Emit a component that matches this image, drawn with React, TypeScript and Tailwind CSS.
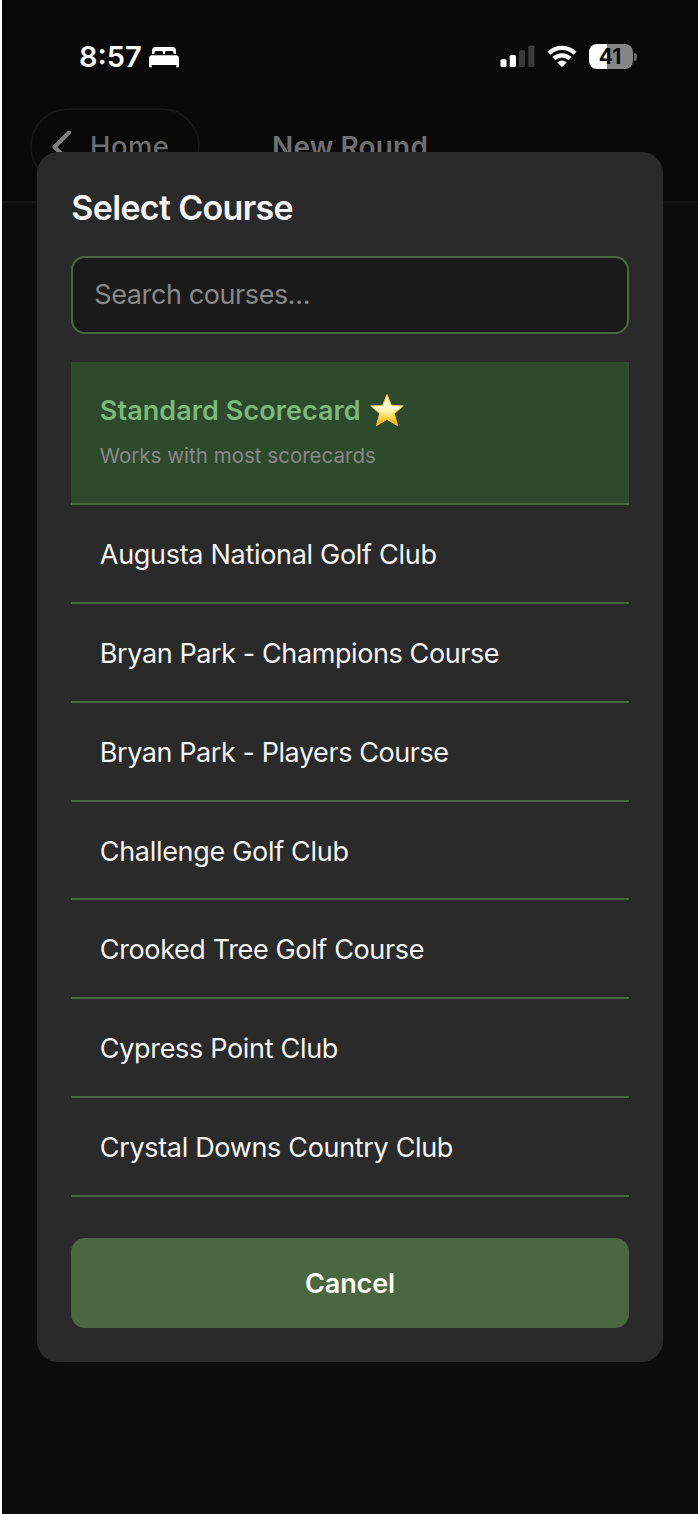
const courses = [
  { name: 'Augusta National Golf Club', tracking: 'tracking-[-0.300px]' },
  { name: 'Bryan Park - Champions Course', tracking: 'tracking-[-0.400px]' },
  { name: 'Bryan Park - Players Course', tracking: 'tracking-[-0.430px]' },
  { name: 'Challenge Golf Club', tracking: 'tracking-[-0.310px]' },
  { name: 'Crooked Tree Golf Course', tracking: 'tracking-[-0.370px]' },
  { name: 'Cypress Point Club', tracking: 'tracking-[-0.320px]' },
  { name: 'Crystal Downs Country Club', tracking: 'tracking-[-0.330px]' },
];

function BedIcon() {
  return (
    <svg width="30" height="22" viewBox="0 0 30 22" fill="#fff">
      <path d="M3 8V4.500Q3 1 6.500 1H23.500Q27 1 27 4.500V8H24.500V6.500Q24.500 5 23 5H17.500Q16 5 16 6.500V8H14V6.500Q14 5 12.500 5H7Q5.500 5 5.500 6.500V8Z" />
      <path d="M0 12.500Q0 9.300 3.200 9.300H26.800Q30 9.300 30 12.500V20.500Q30 21.500 29 21.500H28.200Q27.200 21.500 27.200 20.500V19H2.800V20.500Q2.800 21.500 1.800 21.500H1Q0 21.500 0 20.500Z" />
    </svg>
  );
}

function SignalIcon() {
  return (
    <svg width="35" height="23" viewBox="0 0 35 23">
      <rect x="0.500" y="14" width="6" height="8" rx="1.600" fill="#fff" />
      <rect x="9.700" y="10" width="6.300" height="12" rx="1.600" fill="#fff" />
      <rect x="18.900" y="5.300" width="6.200" height="16.700" rx="1.600" fill="#3a3a3a" />
      <rect x="28.300" y="0.600" width="6.200" height="21.400" rx="1.600" fill="#3a3a3a" />
    </svg>
  );
}

function WifiIcon() {
  return (
    <svg width="30" height="23" viewBox="0 0 30 23" fill="none" stroke="#fff" strokeWidth="4.200">
      <path d="M2 8.200C9.400 1.200 20.600 1.200 28 8.200" />
      <path d="M6.800 13.600C11.400 9.300 18.600 9.300 23.200 13.600" />
      <path d="M15 22L10.300 17.400Q15 13.600 19.700 17.400Z" fill="#fff" stroke="none" />
    </svg>
  );
}

function Battery() {
  return (
    <div className="flex items-center gap-[1.500px]">
      <div className="flex h-[25px] w-[44px] items-center justify-center rounded-[8px] bg-[linear-gradient(90deg,#fff_41%,#858585_41%)] pr-[1px] text-[21px] leading-none font-bold text-[#0a0a0a]">
        41
      </div>
      <div className="h-[8px] w-[3px] rounded-r-full bg-[#6c6c6c]" />
    </div>
  );
}

function Star() {
  return (
    <svg width="36" height="35" viewBox="0 0 36 35">
      <defs>
        <linearGradient id="star" x1="0" y1="0" x2="0" y2="1">
          <stop offset="0" stopColor="#ffe9a0" />
          <stop offset="0.350" stopColor="#fffbdc" />
          <stop offset="0.550" stopColor="#fff2a8" />
          <stop offset="0.800" stopColor="#fdca35" />
          <stop offset="1" stopColor="#f09a14" />
        </linearGradient>
      </defs>
      <path
        d="M18 1.500L22.400 12.300L34.300 12.900L25.300 20.600L28.600 32.700L18 26.400L7.400 32.700L10.700 20.600L1.700 12.900L13.600 12.300Z"
        fill="url(#star)"
        stroke="#f9bd3a"
        strokeWidth="1"
        strokeLinejoin="round"
      />
    </svg>
  );
}

export default function App() {
  return (
    <div className="relative h-[1514px] w-[700px] overflow-hidden border-x-2 border-white bg-[#0d0d0d] font-['Inter',sans-serif]">
      <div className="h-[203px] border-b-2 border-[#141414] bg-[#090909]">
        <div className="flex h-[108px] items-center justify-between pt-[5px] pr-[61px] pl-[77px]">
          <div className="flex items-center gap-[8px]">
            <span className="w-[62px] text-[29px] leading-none font-semibold text-white">8:57</span>
            <BedIcon />
          </div>
          <div className="flex items-center gap-[12px]">
            <SignalIcon />
            <WifiIcon />
            <Battery />
          </div>
        </div>
        <div className="flex items-start pl-[28px]">
          <div className="flex h-[77px] w-[170px] items-center rounded-full border-2 border-[#161616] pl-[19px] text-[27.500px] font-medium text-[#6f6f6f]">
            <svg width="22" height="32" viewBox="0 0 22 32" fill="none" stroke="#808080" strokeWidth="4" strokeLinecap="round" strokeLinejoin="round">
              <path d="M18 1.500L3.500 16L18 30.500" />
            </svg>
            <span className="pl-[17px] tracking-[0.400px]">Home</span>
          </div>
          <span className="pt-[19px] pl-[72px] text-[28px] leading-[40px] font-semibold tracking-[0.150px] text-[#6f6f6f]">New Round</span>
        </div>
      </div>

      <div className="absolute top-[151.500px] left-[35px] flex h-[1210.500px] w-[626px] flex-col rounded-[21px] bg-[#2a2a2a] px-[34.300px] pt-[35px]">
        <h1 className="h-[69px] text-[34px] leading-[42px] font-semibold tracking-[-0.670px] whitespace-nowrap text-[#f5f5f5]">Select Course</h1>
        <input
          className="block h-[78px] w-full shrink-0 rounded-[14px] border-2 border-[#4a6741] bg-[#1a1a1a] px-[21px] text-[27px] tracking-[-0.400px] outline-none placeholder:text-[#888]"
          placeholder="Search courses..."
        />
        <ul className="mt-[28px]">
          <li className="h-[143.800px] border-b-2 border-[#4a6741] bg-[#2d4a2d] pt-[31px] pl-[28.500px]">
            <div className="flex h-[36px] items-center gap-[8px]">
              <span className="w-[261px] text-[27px] leading-[36px] font-semibold tracking-[0.070px] whitespace-nowrap text-[#7cb87c]">Standard Scorecard</span>
              <Star />
            </div>
            <p className="mt-[13px] text-[20.500px] leading-[28px] tracking-[0.020px] whitespace-nowrap text-[#888]">Works with most scorecards</p>
          </li>
          {courses.map((course) => (
            <li
              key={course.name}
              className={`flex h-[98.750px] items-center border-b-2 border-[#4a6741] pt-[4px] pl-[28.500px] text-[27px] whitespace-nowrap text-[#f5f5f5] ${course.tracking}`}
            >
              {course.name}
            </li>
          ))}
        </ul>
        <button className="mt-[41.500px] h-[90px] shrink-0 rounded-[14px] bg-[#4a6741] pt-[2px] text-[27px] font-semibold tracking-[-0.150px] text-white">Cancel</button>
      </div>
    </div>
  );
}
